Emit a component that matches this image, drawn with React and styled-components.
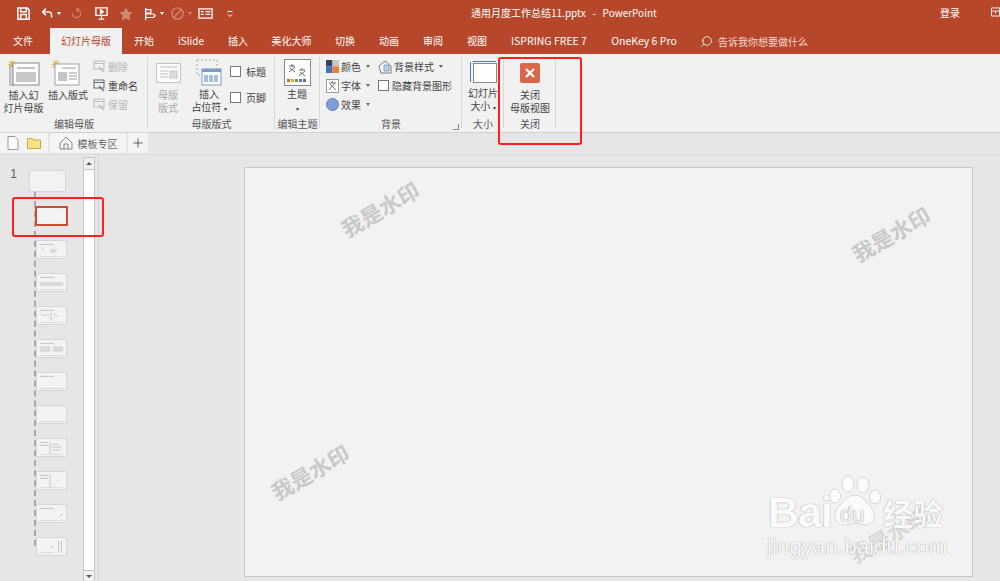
import styled, { createGlobalStyle } from "styled-components"
import { Search, Plus } from "lucide-react"

const GlobalStyle = createGlobalStyle`
    html, body {
        margin: 0;
        padding: 0;
        background: #e6e6e6;
    }
    * {
        box-sizing: border-box;
    }
    #root {
        width: 1000px;
        height: 581px;
        overflow: hidden;
        font-family: "Noto Sans CJK SC", "Liberation Sans", sans-serif;
    }
`

const tabs = [
    { label: "文件", width: 46 },
    { label: "幻灯片母版", width: 72, active: true, gap: 4 },
    { label: "开始", width: 44 },
    { label: "iSlide", width: 50 },
    { label: "插入", width: 44 },
    { label: "美化大师", width: 63 },
    { label: "切换", width: 44 },
    { label: "动画", width: 44 },
    { label: "审阅", width: 44 },
    { label: "视图", width: 44 },
    { label: "ISPRING FREE 7", width: 100, latin: true },
    { label: "OneKey 6 Pro", width: 90, latin: true },
]

// little drawings inside the layout thumbnails, 31x19
const corners = "M26 2l2-1M3 15l2-1M26 15l2-1"
const footer = "M3 16h25"
const title = "M3 3h15"
const layoutThumbs = [
    { id: "sel", selected: true, light: corners },
    { id: "a", dark: `${title} M4 6l4 4 M14 9h8 M14 11h6`, foot: true },
    { id: "b", dark: `${title} M3 9h25 M3 11h25`, foot: true },
    { id: "c", dark: `${title} M4 6l3 3 M15 6v8 M18 6l4 4 M8 8h5`, foot: true },
    { id: "d", dark: `${title} M3 7h11 M3 9h11 M3 11h11 M17 7h11 M17 9h11 M17 11h11`, foot: true },
    { id: "e", dark: title, light: "M26 3l2-1", foot: true },
    { id: "f", light: "M3 3h2 M26 3l2-1 M3 13h1", foot: true },
    { id: "g", dark: `M3 3h9 M14 2v13 M3 6h9 M16 5h8 M16 8h10 M17 11h8`, foot: true },
    { id: "h", dark: `M3 3h9 M14 2v13 M3 6h9`, light: "M21 9h2", foot: true },
    { id: "i", dark: `${title} M23 13l5-5`, foot: true },
    { id: "j", dark: "M23 2v13 M26 2v13 M17 7l-2 3", light: "M3 15h15", foot: false },
]

const Stroke = ({ size = 14, color = "#fff", width = 1.4, children, vb = 16 }) => (
    <svg width={size} height={size} viewBox={`0 0 ${vb} ${vb}`} fill="none" stroke={color} strokeWidth={width}>
        {children}
    </svg>
)

function QuickBar() {
    return (
        <QuickIcons>
            <Stroke size={15} width={1.6}><path d="M2 2h10l2 2v10H2zM5 2v4h6V2M5 14V9h6v5" /></Stroke>
            <Gap w={10} />
            <Stroke size={13} width={1.8}><path d="M6 2 2 6l4 4M2 6h7a4 4 0 0 1 4 4v3" /></Stroke>
            <Caret />
            <Gap w={9} />
            <Stroke size={13} color="#cf8a76"><path d="M8 3a5 5 0 1 1-5 5M8 3l3-2M8 3l2 3" /></Stroke>
            <Gap w={11} />
            <Stroke size={15}><path d="M1 2h14M2 2v8h12V2M8 10v3M5 14h6" /><path d="M7 4v4l3-2z" fill="#fff" /></Stroke>
            <Gap w={10} />
            <Stroke size={14} color="#cf8a76"><path d="m8 2 2 4 4 .6-3 3 .8 4.400L8 12l-3.800 2 .8-4.400-3-3L6 6z" fill="#cf8a76" /></Stroke>
            <Gap w={10} />
            <Stroke size={14}><path d="M3 1v14M3 3h6v4H3M3 8h9l2 2-2 2H3" /></Stroke>
            <Caret />
            <Gap w={6} />
            <Stroke size={15} color="#cf8a76"><circle cx="8" cy="8" r="6" /><path d="m4 12 8-8" /></Stroke>
            <Caret $faded />
            <Gap w={6} />
            <Stroke size={15}><path d="M1 3h14v10H1zM3 6h3M3 9h3M8 6h5M8 9h5" /></Stroke>
            <Gap w={13} />
            <Stroke size={8} width={2}><path d="M3 3h10M4 9l4 4 4-4" /></Stroke>
        </QuickIcons>
    )
}

function InsertMasterIcon({ layout }) {
    return (
        <svg width="36" height="28" viewBox="0 0 36 28">
            <g stroke="#e8b93f" strokeWidth="1.2">
                <path d="M6 1v9M1.500 5.500h9M3 2.500l6 6M9 2.500l-6 6" />
            </g>
            {layout ? (
                <>
                    <rect x="5" y="5" width="24" height="21" fill="#fff" stroke="#a0a0a0" />
                    <rect x="8" y="13" width="9" height="9" fill="#c4c4c4" />
                    <path d="M19 14h8M19 17h8M19 20h8M12 9h14" stroke="#999" />
                </>
            ) : (
                <>
                    <rect x="4" y="7" width="4" height="19" fill="#ddd" stroke="#999" />
                    <rect x="7" y="4" width="26" height="22" fill="#fff" stroke="#888" />
                    <rect x="10" y="13" width="20" height="10" fill="#c8c8c8" />
                    <path d="M11 9h18" stroke="#888" />
                </>
            )}
        </svg>
    )
}

function SmallEditIcon({ dim }) {
    const c = dim ? "#bbb" : "#666"
    return (
        <svg width="13" height="13" viewBox="0 0 13 13" fill="none" stroke={c}>
            <rect x="1" y="1" width="10" height="8" />
            <path d="M1 3.500h10" />
            <path d="m6 7 5 5" stroke={dim ? "#bbb" : "#4a7ebb"} strokeWidth="1.500" />
        </svg>
    )
}

function PlaceholderIcon() {
    return (
        <svg width="26" height="27" viewBox="0 0 26 27" fill="none">
            <rect x="1" y="1" width="20" height="15" stroke="#aaa" strokeDasharray="2 2" />
            <rect x="6" y="10" width="19" height="16" fill="#fff" stroke="#7d9cc0" />
            <rect x="6" y="10" width="19" height="3" fill="#7d9cc0" />
            <path d="M9 16v7M11 16v7M14 16v7M16 16v7M19 16v7M21 16v7" stroke="#4a7ebb" />
        </svg>
    )
}

function ThemeIcon() {
    return (
        <svg width="27" height="27" viewBox="0 0 27 27">
            <rect x="0.500" y="0.500" width="26" height="26" fill="#fff" stroke="#8a8a8a" />
            <path d="M5 7h6M8 5v3M5 13l6-5M6 9l5 4M15 11h6M18 9v2M15 17l6-5M16 13l5 4" stroke="#666" fill="none" />
            <g>
                <rect x="3" y="20" width="3" height="3" fill="#d9692f" />
                <rect x="7" y="20" width="3" height="3" fill="#e8a92f" />
                <rect x="11" y="20" width="3" height="3" fill="#6fa53f" />
                <rect x="15" y="20" width="3" height="3" fill="#4a7ebb" />
                <rect x="19" y="20" width="3" height="3" fill="#7f5fa8" />
            </g>
        </svg>
    )
}

function ColorIcon() {
    return (
        <svg width="13" height="13" viewBox="0 0 13 13">
            <rect width="6.500" height="6.500" fill="#35465e" />
            <rect x="6.500" width="6.500" height="6.500" fill="#c9c9c9" />
            <rect y="6.500" width="6.500" height="6.500" fill="#3e74c4" />
            <rect x="6.500" y="6.500" width="6.500" height="6.500" fill="#ec7d31" />
        </svg>
    )
}

function FontIcon() {
    return (
        <svg width="13" height="14" viewBox="0 0 13 14" fill="none">
            <rect x="0.500" y="0.500" width="12" height="13" fill="#fff" stroke="#9a9a9a" />
            <path d="M3 4h7M6.500 2v2M3 11l6-7M4 5l6 6" stroke="#777" />
        </svg>
    )
}

function EffectIcon() {
    return (
        <svg width="13" height="13" viewBox="0 0 14 14">
            <circle cx="7" cy="7" r="6.500" fill="#7f9fdc" stroke="#5c7cb8" />
        </svg>
    )
}

function BackgroundIcon() {
    return (
        <svg width="14" height="14" viewBox="0 0 14 14" fill="none">
            <path d="M1 6 7 1l6 5v7H3z" fill="#fff" stroke="#777" />
            <path d="M6 5h5v6H6z" fill="#bcd0ea" stroke="#7d9cc0" />
        </svg>
    )
}

function SizeIcon() {
    return (
        <svg width="28" height="24" viewBox="0 0 28 24" fill="none">
            <path d="M1.500 2v20M4 1.500h23" stroke="#4a7ebb" />
            <rect x="4.500" y="3.500" width="23" height="19" fill="#fff" stroke="#8a8a8a" />
        </svg>
    )
}

function CloseIcon() {
    return (
        <svg width="20" height="20" viewBox="0 0 20 20">
            <rect width="20" height="20" rx="2" fill="#d9654a" />
            <path d="m6 6 8 8M14 6l-8 8" stroke="#fff" strokeWidth="2.400" />
        </svg>
    )
}

function SmallButton({ icon, children, caret, dim }) {
    return (
        <SmallRow $dim={dim}>
            {icon}
            <span>{children}</span>
            {caret && <Caret $dark />}
        </SmallRow>
    )
}

function CheckItem({ children }) {
    return (
        <CheckRow>
            <CheckBox />
            <span>{children}</span>
        </CheckRow>
    )
}

function ThumbArt({ dark, light, foot, w = 31, h = 19 }) {
    return (
        <svg width={w} height={h} viewBox={`0 0 ${w} ${h}`} fill="none" strokeWidth="0.800">
            {light && <path d={light} stroke="#d0d0d0" />}
            {dark && <path d={dark} stroke="#b4b4b4" />}
            {foot && <path d={footer} stroke="#c4c4c4" strokeDasharray="2 1" />}
        </svg>
    )
}

function PawLogo() {
    return (
        <svg width="54" height="58" viewBox="0 0 54 58">
            <g fill="#fbfbfb" stroke="#d4d4d4" strokeWidth="1">
                <ellipse cx="20" cy="10" rx="6" ry="8" />
                <ellipse cx="35" cy="11" rx="6" ry="8" />
                <ellipse cx="7" cy="22" rx="5.500" ry="7" />
                <ellipse cx="47" cy="23" rx="5.500" ry="7" />
                <path d="M27 21c7 0 10 6 15 11 7 7 5 19-5 19-5 0-7-2-10-2s-6 2-11 2c-10 0-12-12-5-19 5-4 8-11 16-11z" />
            </g>
        </svg>
    )
}

export default function App() {
    return (
        <Page>
            <GlobalStyle />
            <TitleBar>
                <QuickBar />
                <DocTitle>通用月度工作总结11.pptx   -   PowerPoint</DocTitle>
                <SignIn>登录</SignIn>
                <DisplayOptions>
                    <svg width="10" height="10" viewBox="0 0 10 10" fill="none" stroke="#fff"><path d="M.5.5h9v9h-9zM.5 4h9M5 4v3" /></svg>
                </DisplayOptions>
            </TitleBar>
            <TabBar>
                {tabs.map(t => (
                    <Tab key={t.label} $active={t.active} $width={t.width} $gap={t.gap} $latin={t.latin}>{t.label}</Tab>
                ))}
                <TellMe>
                    <Search size={13} color="#fff" strokeWidth={1.5} style={{ transform: "scaleX(-1)" }} />
                    <span>告诉我你想要做什么</span>
                </TellMe>
            </TabBar>

            <Ribbon>
                <Group $width={148} label="编辑母版">
                    <LargeButton $width={47}>
                        <IconSlot><InsertMasterIcon /></IconSlot>
                        <LargeText>插入幻<br />灯片母版</LargeText>
                    </LargeButton>
                    <LargeButton $width={42}>
                        <IconSlot><InsertMasterIcon layout /></IconSlot>
                        <LargeText>插入版式</LargeText>
                    </LargeButton>
                    <SmallColumn $pad={4}>
                        <SmallButton dim icon={<SmallEditIcon dim />}>删除</SmallButton>
                        <SmallButton icon={<SmallEditIcon />}>重命名</SmallButton>
                        <SmallButton dim icon={<SmallEditIcon dim />}>保留</SmallButton>
                    </SmallColumn>
                </Group>
                <Group $width={127} label="母版版式">
                    <LargeButton $width={40} $dim>
                        <IconSlot>
                            <svg width="25" height="20" viewBox="0 0 25 20" fill="none" stroke="#c4c4c4">
                                <rect x="0.500" y="0.500" width="24" height="19" fill="#fafafa" />
                                <path d="M4 4h17M4 8h8M4 11h8M4 14h8" />
                                <rect x="14" y="8" width="7" height="7" fill="#ddd" />
                            </svg>
                        </IconSlot>
                        <LargeText>母版<br />版式</LargeText>
                    </LargeButton>
                    <LargeButton $width={42}>
                        <IconSlot><PlaceholderIcon /></IconSlot>
                        <LargeText>插入<br />占位符 <small>▾</small></LargeText>
                    </LargeButton>
                    <CheckColumn>
                        <CheckItem>标题</CheckItem>
                        <CheckItem>页脚</CheckItem>
                    </CheckColumn>
                </Group>
                <Group $width={45} label="编辑主题">
                    <LargeButton $width={44}>
                        <IconSlot><ThemeIcon /></IconSlot>
                        <LargeText>主题<br /><small>▾</small></LargeText>
                    </LargeButton>
                </Group>
                <Group $width={142} label="背景" launcher>
                    <SmallColumn $pad={6}>
                        <SmallButton caret icon={<ColorIcon />}>颜色</SmallButton>
                        <SmallButton caret icon={<FontIcon />}>字体</SmallButton>
                        <SmallButton caret icon={<EffectIcon />}>效果</SmallButton>
                    </SmallColumn>
                    <SmallColumn $pad={8}>
                        <SmallButton caret icon={<BackgroundIcon />}>背景样式</SmallButton>
                        <SmallRow><CheckBox /><span>隐藏背景图形</span></SmallRow>
                    </SmallColumn>
                </Group>
                <Group $width={42} label="大小">
                    <LargeButton $width={42}>
                        <IconSlot><SizeIcon /></IconSlot>
                        <LargeText>幻灯片<br />大小 <small>▾</small></LargeText>
                    </LargeButton>
                </Group>
                <Group $width={52} label="关闭">
                    <LargeButton $width={52}>
                        <IconSlot><CloseIcon /></IconSlot>
                        <LargeText>关闭<br />母版视图</LargeText>
                    </LargeButton>
                </Group>
            </Ribbon>

            <DocStrip>
                <StripCell $width={48} $gap={8}>
                    <svg width="12" height="14" viewBox="0 0 12 14" fill="#fff" stroke="#9a9a9a"><path d="M1 .5h7l3 3v10H1z" /></svg>
                    <svg width="14" height="12" viewBox="0 0 14 12" fill="#fbe08a" stroke="#cfa93e"><path d="M.5 1.500h5l1 1.500h7v8.500H.5z" /></svg>
                </StripCell>
                <StripCell $width={76} $gap={5}>
                    <svg width="14" height="14" viewBox="0 0 14 14" fill="none" stroke="#888"><path d="M1 7 7 1l6 6v6H1zM5 13V8h4v5" /></svg>
                    <StripText>模板专区</StripText>
                </StripCell>
                <StripCell $width={20}><Plus size={14} color="#555" strokeWidth={1.6} /></StripCell>
            </DocStrip>

            <Workspace>
                <ThumbPane>
                    <ThumbList>
                        <MasterRow>
                            <SlideNo>1</SlideNo>
                            <MasterThumb><ThumbArt w={35} h={20} light="M30 3l2-1M3 17l2-1M30 17l2-1" /></MasterThumb>
                        </MasterRow>
                        <LayoutTree>
                            {layoutThumbs.map(k => (
                                <LayoutThumb key={k.id} $selected={k.selected}>
                                    <ThumbArt dark={k.dark} light={k.light} foot={k.foot} />
                                </LayoutThumb>
                            ))}
                        </LayoutTree>
                    </ThumbList>
                    <ScrollBar>
                        <ScrollBtn $height={12}><ScrollArrow $up /></ScrollBtn>
                        <ScrollBtn $height={11} $end><ScrollArrow /></ScrollBtn>
                    </ScrollBar>
                </ThumbPane>
                <Stage>
                    <Slide />
                </Stage>
                <WaterMark $x={337} $y={197}>我是水印</WaterMark>
                <WaterMark $x={848} $y={222}>我是水印</WaterMark>
                <WaterMark $x={267} $y={460}>我是水印</WaterMark>
                <WaterMark $x={845} $y={523} $faint>我是水印</WaterMark>
                <BaiduMark>
                    <BaiduTop>
                        <BaiduWord>Bai</BaiduWord>
                        <PawWrap>
                            <PawLogo />
                            <PawText>du</PawText>
                        </PawWrap>
                        <BaiduCn>经验</BaiduCn>
                    </BaiduTop>
                    <BaiduUrl>jingyan.baidu.com</BaiduUrl>
                </BaiduMark>
            </Workspace>

            <Highlight $x={498} $y={57} $w={84} $h={88} />
            <Highlight $x={12} $y={197} $w={92} $h={40} />
        </Page>
    )
}

function Group({ $width, label, launcher, children }) {
    return (
        <GroupBox $width={$width}>
            <GroupBody>{children}</GroupBody>
            <GroupLabel>{label}</GroupLabel>
            {launcher && <Launcher />}
        </GroupBox>
    )
}

const Page = styled.div`
    position: relative;
    width: 1000px;
    height: 581px;
    display: flex;
    flex-direction: column;
    background: #e6e6e6;
`

const TitleBar = styled.div`
    position: relative;
    height: 27px;
    background: #b7472a;
    display: flex;
    align-items: center;
    padding-left: 16px;
`

const QuickIcons = styled.div`
    display: flex;
    align-items: center;
`

const Gap = styled.span`
    display: inline-block;
    width: ${p => p.w}px;
`

const Caret = styled.span`
    width: 0;
    height: 0;
    margin-left: 3px;
    border-left: 2.5px solid transparent;
    border-right: 2.5px solid transparent;
    border-top: 3px solid ${p => (p.$dark ? "#666" : p.$faded ? "#cf8a76" : "#fff")};
`

const DocTitle = styled.div`
    position: absolute;
    left: 471px;
    top: 5px;
    font-size: 10px;
    line-height: 15px;
    color: #fff;
    white-space: pre;
`

const SignIn = styled.div`
    position: absolute;
    left: 940px;
    top: 5px;
    font-size: 10px;
    line-height: 15px;
    color: #fff;
`

const DisplayOptions = styled.div`
    position: absolute;
    left: 991px;
    top: 7px;
    width: 9px;
    height: 10px;
    overflow: hidden;
    display: flex;
`

const TabBar = styled.div`
    height: 27px;
    background: #b7472a;
    display: flex;
    align-items: flex-end;
    font-size: 10px;
`

const Tab = styled.div`
    width: ${p => p.$width}px;
    height: 26px;
    margin-left: ${p => p.$gap ?? 0}px;
    line-height: 25px;
    font-size: ${p => (p.$latin ? 10.5 : 10)}px;
    text-align: center;
    white-space: nowrap;
    color: ${p => (p.$active ? "#b7472a" : "#fff")};
    background: ${p => (p.$active ? "#f1f1f1" : "transparent")};
`

const TellMe = styled.div`
    height: 26px;
    margin-left: 11px;
    display: flex;
    align-items: center;
    gap: 5px;
    color: #f2d8d0;
`

const Ribbon = styled.div`
    height: 79px;
    background: #f1f1f1;
    border-bottom: 1px solid #d2d2d2;
    display: flex;
`

const GroupBox = styled.div`
    position: relative;
    width: ${p => p.$width}px;
    height: 76px;
    margin-top: 2px;
    display: flex;
    flex-direction: column;
    &::after {
        content: "";
        position: absolute;
        top: 1px;
        right: 0;
        bottom: 4px;
        width: 1px;
        background: #d8d8d8;
    }
`

const GroupBody = styled.div`
    flex: 1;
    display: flex;
    min-height: 0;
`

const GroupLabel = styled.div`
    height: 18px;
    line-height: 20px;
    font-size: 10px;
    color: #555;
    text-align: center;
`

const Launcher = styled.span`
    position: absolute;
    right: 3px;
    bottom: 2px;
    width: 6px;
    height: 6px;
    border-left: 1px solid #888;
    border-bottom: 1px solid #888;
    transform: scaleX(-1);
`

const LargeButton = styled.div`
    width: ${p => p.$width}px;
    flex: none;
    display: flex;
    flex-direction: column;
    align-items: center;
    padding-top: 3px;
    color: ${p => (p.$dim ? "#aaa" : "#444")};
`

const IconSlot = styled.div`
    height: 28px;
    display: flex;
    align-items: center;
    justify-content: center;
`

const LargeText = styled.div`
    margin-top: 2px;
    font-size: 10px;
    line-height: 12.5px;
    text-align: center;
    white-space: nowrap;
    small {
        font-size: 6px;
    }
`

const SmallColumn = styled.div`
    display: flex;
    flex-direction: column;
    padding: 1px 0 0 ${p => p.$pad ?? 2}px;
`

const SmallRow = styled.div`
    height: 19px;
    display: flex;
    align-items: center;
    gap: 2px;
    font-size: 10px;
    white-space: nowrap;
    color: ${p => (p.$dim ? "#b4b4b4" : "#444")};
`

const CheckColumn = styled.div`
    padding: 8px 0 0 0;
    display: flex;
    flex-direction: column;
    gap: 12px;
`

const CheckRow = styled.div`
    display: flex;
    align-items: center;
    gap: 4px;
    height: 14px;
    font-size: 10px;
    color: #444;
`

const CheckBox = styled.span`
    display: block;
    flex: none;
    width: 11px;
    height: 11px;
    margin-right: 1px;
    background: #fff;
    border: 1px solid #777;
`

const DocStrip = styled.div`
    height: 22px;
    background: #e6e6e6;
    display: flex;
    gap: 2px;
    padding-bottom: 1px;
    border-bottom: 1px solid #dcdcdc;
`

const StripCell = styled.div`
    width: ${p => p.$width}px;
    background: #f4f4f4;
    display: flex;
    align-items: center;
    justify-content: center;
    gap: ${p => p.$gap ?? 0}px;
`

const StripText = styled.span`
    font-size: 10px;
    color: #666;
`

const Workspace = styled.div`
    position: relative;
    flex: 1;
    display: flex;
    min-height: 0;
`

const ThumbPane = styled.div`
    width: 99px;
    height: 100%;
    display: flex;
    justify-content: space-between;
    padding-right: 3px;
    border-right: 1px solid #d2d2d2;
`

const ThumbList = styled.div`
    width: 83px;
    padding-top: 15px;
`

const MasterRow = styled.div`
    height: 21px;
    display: flex;
`

const SlideNo = styled.div`
    width: 29px;
    padding-left: 10px;
    font-size: 13px;
    line-height: 8px;
    color: #666;
    font-family: "Liberation Sans", sans-serif;
`

const MasterThumb = styled.div`
    width: 37px;
    height: 22px;
    background: #f3f3f3;
    border: 1px solid #d6d6d6;
    display: flex;
`

const LayoutTree = styled.div`
    width: 34px;
    margin-left: 34px;
    padding: 15px 0 0 0;
    border-left: 2px dashed #a8a8a8;
    display: flex;
    flex-direction: column;
    gap: 14px;
    height: 355px;
`

const LayoutThumb = styled.div`
    flex: none;
    display: flex;
    width: ${p => (p.$selected ? 33 : 31)}px;
    height: ${p => (p.$selected ? 20 : 19)}px;
    margin-left: ${p => (p.$selected ? -1 : 0)}px;
    background: #f3f3f3;
    border: ${p => (p.$selected ? "2px solid #c8502f" : "1px solid #d6d6d6")};
    overflow: hidden;
`

const ScrollBar = styled.div`
    width: 12px;
    margin-top: 2px;
    background: #fff;
    border: 1px solid #c6c6c6;
    border-bottom: none;
    display: flex;
    flex-direction: column;
    justify-content: space-between;
`

const ScrollBtn = styled.div`
    height: ${p => p.$height}px;
    background: #f1f1f1;
    display: flex;
    align-items: center;
    justify-content: center;
    border-top: ${p => (p.$end ? "1px solid #c6c6c6" : "none")};
    border-bottom: ${p => (p.$end ? "none" : "1px solid #c6c6c6")};
`

const ScrollArrow = styled.span`
    width: 0;
    height: 0;
    border-left: 3.5px solid transparent;
    border-right: 3.5px solid transparent;
    border-top: ${p => (p.$up ? "none" : "3.5px solid #555")};
    border-bottom: ${p => (p.$up ? "3.5px solid #555" : "none")};
`

const Stage = styled.div`
    flex: 1;
    padding: 12px 27px 4px 145px;
    background: #e6e6e6;
`

const Slide = styled.div`
    height: 100%;
    background: #f2f2f2;
    border: 1px solid #c8c8c8;
`

const WaterMark = styled.div`
    position: absolute;
    left: ${p => p.$x}px;
    top: ${p => p.$y - 157}px;
    width: 86px;
    font-size: 21.5px;
    font-weight: 700;
    line-height: 28px;
    white-space: nowrap;
    color: ${p => (p.$faint ? "#d8d8d8" : "#c9c9c9")};
    transform: rotate(-30deg);
`

const BaiduMark = styled.div`
    position: absolute;
    left: 767px;
    top: 319px;
    width: 190px;
    color: #fafafa;
    text-shadow: 0 0 1px #aaa, 0 0 1px #aaa;
    font-family: "Liberation Sans", sans-serif;
`

const BaiduTop = styled.div`
    display: flex;
    align-items: flex-end;
    height: 58px;
`

const BaiduWord = styled.div`
    font-size: 43px;
    font-weight: 700;
    line-height: 40px;
    width: 61px;
    padding-left: 1px;
    letter-spacing: -1px;
`

const PawWrap = styled.div`
    position: relative;
    width: 55px;
    height: 58px;
`

const PawText = styled.span`
    position: absolute;
    left: 12px;
    top: 30px;
    font-size: 22px;
    line-height: 22px;
    color: #f5f5f5;
    text-shadow: 0 0 1px #999, 0 0 1px #999;
`

const BaiduCn = styled.div`
    font-family: "Noto Sans CJK SC", sans-serif;
    font-size: 30px;
    font-weight: 700;
    line-height: 40px;
`

const BaiduUrl = styled.div`
    margin-top: 2px;
    font-size: 22.4px;
    line-height: 26px;
    white-space: nowrap;
`

const Highlight = styled.div`
    position: absolute;
    left: ${p => p.$x}px;
    top: ${p => p.$y}px;
    width: ${p => p.$w}px;
    height: ${p => p.$h}px;
    border: 2px solid #ff1f1f;
    border-radius: 3px;
    pointer-events: none;
`
